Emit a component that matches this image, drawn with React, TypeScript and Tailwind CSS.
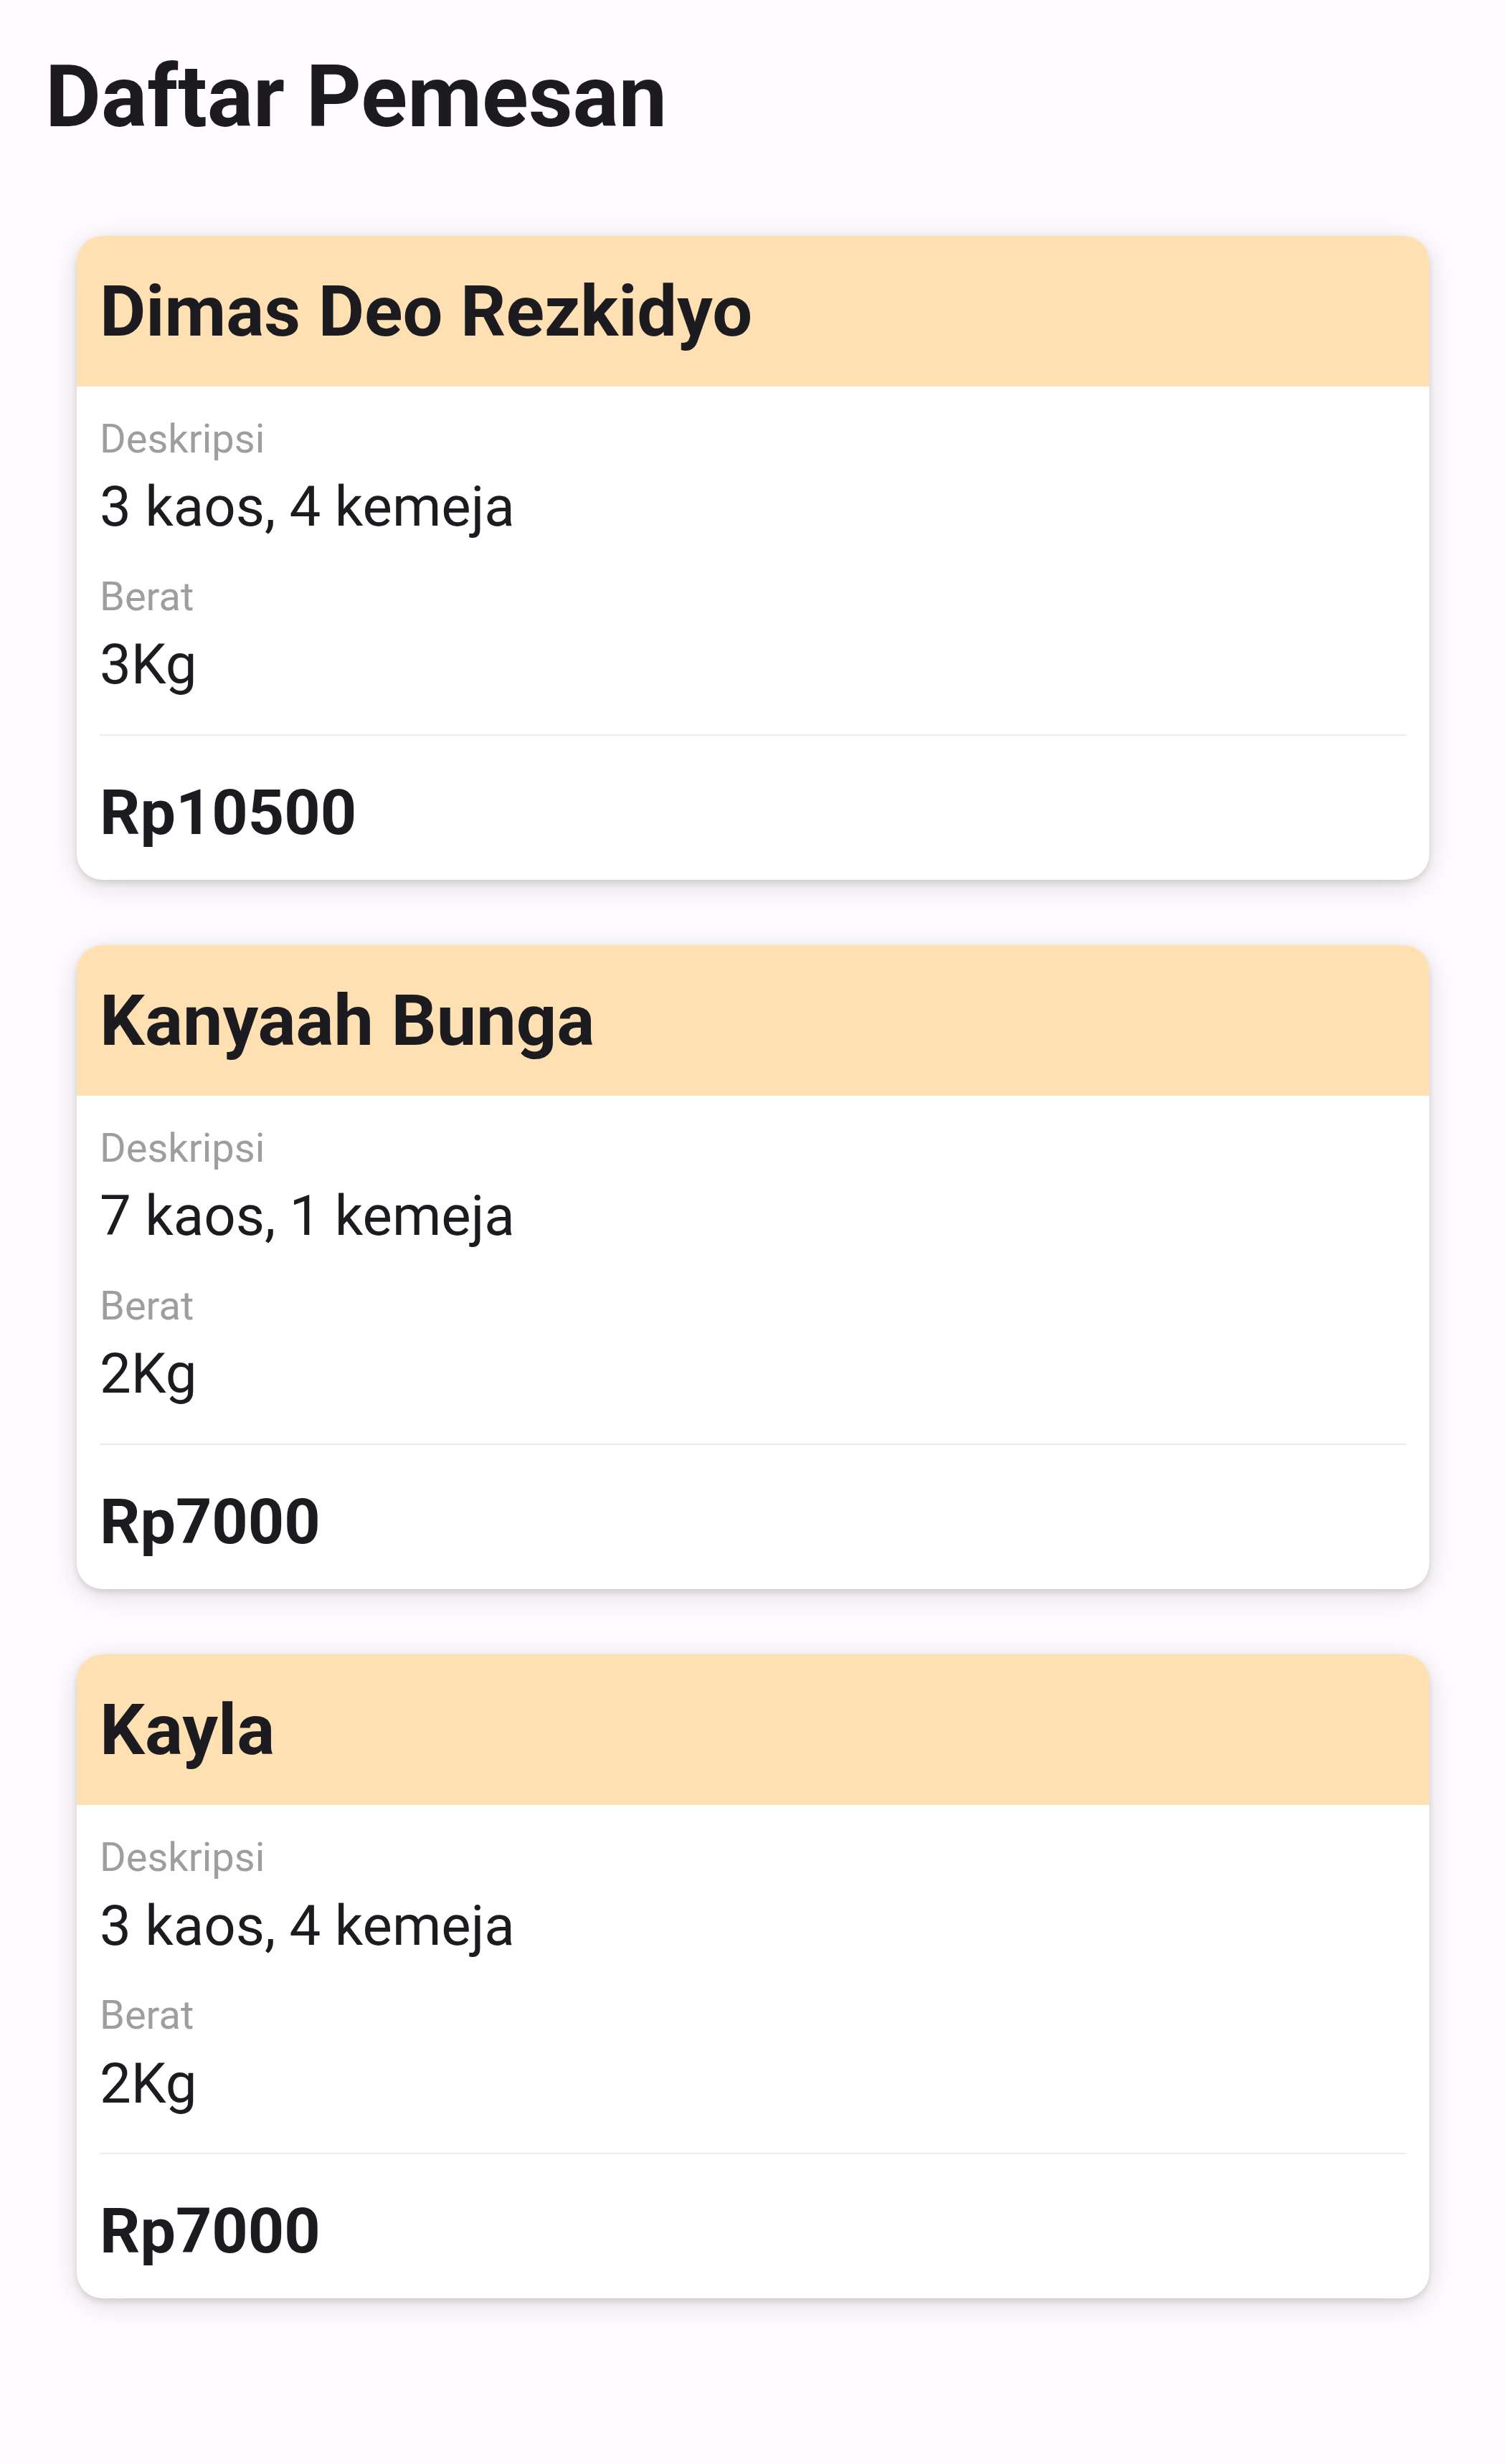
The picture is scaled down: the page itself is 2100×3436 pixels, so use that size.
import React from "react";

type Order = { name: string; desc: string; weight: string; price: string };

const orders: Order[] = [
  { name: "Dimas Deo Rezkidyo", desc: "3 kaos, 4 kemeja", weight: "3Kg", price: "Rp10500" },
  { name: "Kanyaah Bunga", desc: "7 kaos, 1 kemeja", weight: "2Kg", price: "Rp7000" },
  { name: "Kayla", desc: "3 kaos, 4 kemeja", weight: "2Kg", price: "Rp7000" },
];

function OrderCard({ o }: { o: Order }) {
  return (
    <div className="rounded-[36px] bg-white overflow-hidden shadow-[0_4px_10px_rgba(0,0,0,0.12),0_8px_44px_rgba(0,0,0,0.13)]">
      <div className="h-[210px] bg-[#FFE0B2] px-[32px] flex items-center">
        <div className="text-[99px] font-bold leading-[1.172] text-[#1C1B1F]">{o.name}</div>
      </div>
      <div className="px-[32px] pt-[41px] pb-[43px] flex flex-col">
        <div className="text-[56px] leading-[1.172] text-[#9E9E9E]">Deskripsi</div>
        <div className="mt-[16px] text-[78px] leading-[1.172] text-[#1C1B1F]">{o.desc}</div>
        <div className="mt-[47px] text-[56px] leading-[1.172] text-[#9E9E9E]">Berat</div>
        <div className="mt-[16px] text-[78px] leading-[1.172] text-[#1C1B1F]">{o.weight}</div>
        <div className="mt-[51px] h-[2px] bg-[#EDEBEE]" />
        <div className="mt-[55px] text-[88px] font-bold leading-[1.172] text-[#1C1B1F]">{o.price}</div>
      </div>
    </div>
  );
}

export default function App() {
  return (
    <div className="min-h-screen bg-[#FFFBFE] pb-[200px]" style={{ fontFamily: "Roboto, 'Noto Sans', sans-serif" }}>
      <h1 className="pl-[63px] pt-[65px] text-[120px] font-bold leading-[1.172] text-[#1C1B1F]">Daftar Pemesan</h1>
      <div className="mt-[123px] px-[107px] flex flex-col gap-[91px]">
        {orders.map((o, i) => (
          <OrderCard key={i} o={o} />
        ))}
      </div>
    </div>
  );
}
